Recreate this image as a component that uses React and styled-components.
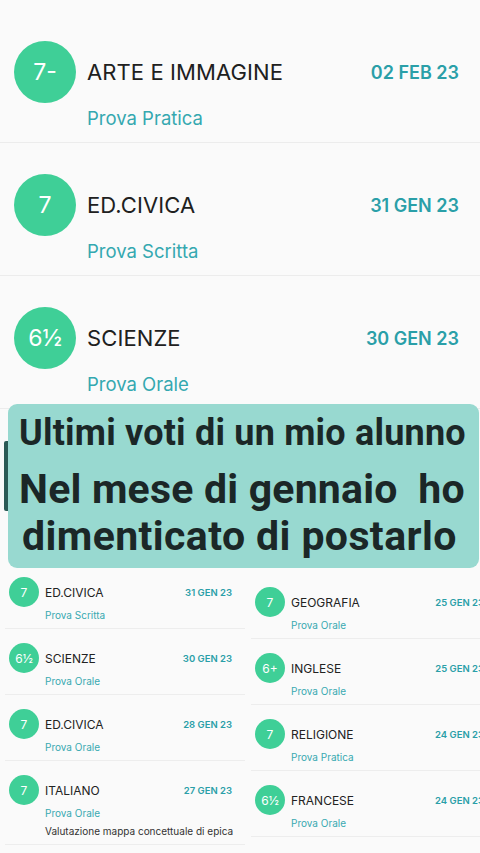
import React from "react";
import styled, { createGlobalStyle } from "styled-components";

const Global = createGlobalStyle`
  html, body { margin: 0; padding: 0; background: #fafafa; }
  body { font-family: "Inter", "Open Sans", sans-serif; }
  * { box-sizing: border-box; }
`;

const Page = styled.div`
  width: 480px;
  height: 853px;
  overflow: hidden;
  background: #fafafa;
  position: relative;
`;

const TopList = styled.div`
  padding-top: 10px;
`;

const BigRow = styled.div`
  display: grid;
  grid-template-columns: 62px 1fr auto;
  grid-template-rows: 62px auto;
  column-gap: 11px;
  align-items: center;
  padding: 31px 21px 12px 14px;
  border-bottom: 1px solid #ececec;
`;

const Circle = styled.div`
  width: ${(p) => p.$size}px;
  height: ${(p) => p.$size}px;
  border-radius: 50%;
  background: #3fcf97;
  color: #fff;
  display: flex;
  align-items: center;
  justify-content: center;
  font-size: ${(p) => p.$font}px;
  font-weight: 400;
`;

const BigTitle = styled.div`
  font-size: 22px;
  color: #202020;
  letter-spacing: 0.1px;
  white-space: nowrap;
`;

const BigDate = styled.div`
  font-size: 18px;
  font-weight: 600;
  color: #2a9fa8;
  white-space: nowrap;
`;

const BigSub = styled.div`
  grid-column: 2 / 4;
  font-size: 18.5px;
  color: #34a8b0;
  line-height: 24px;
  margin-top: 3px;
`;

const BannerWrap = styled.div`
  display: flex;
  align-items: flex-start;
  padding-left: 4px;
  margin-top: -5px;
  position: relative;
  z-index: 1;
`;

const Strip = styled.div`
  width: 4px;
  height: 70px;
  margin-top: 37px;
  background: #2b5a55;
  border-radius: 2px 0 0 2px;
`;

const Banner = styled.div`
  width: 471px;
  height: 164px;
  background: #98d9d0;
  border-radius: 9px;
  padding: 8px 0 0 11px;
  font-family: "Roboto", "Liberation Sans", sans-serif;
  font-weight: 700;
  color: #1b2727;
`;

const BannerLine = styled.div`
  font-size: ${(p) => p.$size}px;
  line-height: ${(p) => p.$lh}px;
  margin-top: ${(p) => p.$mt || 0}px;
  padding-left: ${(p) => p.$indent || 0}px;
  letter-spacing: ${(p) => p.$ls || 0}px;
  white-space: pre;
`;

const BottomGrid = styled.div`
  display: grid;
  grid-template-columns: 240px 246px;
  column-gap: 6px;
  padding-left: 5px;
  margin-top: -6px;
`;

const Column = styled.div`
  padding-top: ${(p) => p.$top}px;
`;

const SmallRow = styled.div`
  display: grid;
  grid-template-columns: 30px 1fr auto;
  grid-template-rows: 30px auto;
  column-gap: 6px;
  align-items: center;
  padding: 14px 13px 6px 4px;
  border-bottom: 1px solid #ededed;
`;

const SmallTitle = styled.div`
  font-size: 12px;
  color: #222;
  white-space: nowrap;
`;

const SmallDate = styled.div`
  font-size: 9.5px;
  font-weight: 600;
  color: #2a9fa8;
  white-space: nowrap;
`;

const SmallSub = styled.div`
  grid-column: 2 / 4;
  font-size: 10px;
  line-height: 14px;
  color: #38a9b1;
  margin-top: 1px;
`;

const SmallNote = styled.div`
  grid-column: 2 / 4;
  font-size: 10px;
  line-height: 14px;
  color: #333;
  margin-top: 4px;
  white-space: nowrap;
`;

const big = [
  { g: "7-", s: "ARTE E IMMAGINE", d: "02 FEB 23", t: "Prova Pratica" },
  { g: "7", s: "ED.CIVICA", d: "31 GEN 23", t: "Prova Scritta" },
  { g: "6½", s: "SCIENZE", d: "30 GEN 23", t: "Prova Orale" },
];

const left = [
  { g: "7", s: "ED.CIVICA", d: "31 GEN 23", t: "Prova Scritta" },
  { g: "6½", s: "SCIENZE", d: "30 GEN 23", t: "Prova Orale" },
  { g: "7", s: "ED.CIVICA", d: "28 GEN 23", t: "Prova Orale" },
  {
    g: "7",
    s: "ITALIANO",
    d: "27 GEN 23",
    t: "Prova Orale",
    n: "Valutazione mappa concettuale di epica",
  },
];

const right = [
  { g: "7", s: "GEOGRAFIA", d: "25 GEN 23", t: "Prova Orale" },
  { g: "6+", s: "INGLESE", d: "25 GEN 23", t: "Prova Orale" },
  { g: "7", s: "RELIGIONE", d: "24 GEN 23", t: "Prova Pratica" },
  { g: "6½", s: "FRANCESE", d: "24 GEN 23", t: "Prova Orale" },
];

function Small({ r }) {
  return (
    <SmallRow>
      <Circle $size={30} $font={12}>{r.g}</Circle>
      <SmallTitle>{r.s}</SmallTitle>
      <SmallDate>{r.d}</SmallDate>
      <SmallSub>{r.t}</SmallSub>
      {r.n && <SmallNote>{r.n}</SmallNote>}
    </SmallRow>
  );
}

export default function App() {
  return (
    <Page>
      <Global />
      <TopList>
        {big.map((r, i) => (
          <BigRow key={i}>
            <Circle $size={62} $font={23}>{r.g}</Circle>
            <BigTitle>{r.s}</BigTitle>
            <BigDate>{r.d}</BigDate>
            <BigSub>{r.t}</BigSub>
          </BigRow>
        ))}
      </TopList>
      <BannerWrap>
        <Strip />
        <Banner>
          <BannerLine $size={36} $lh={42} $ls={0.2}>Ultimi voti di un mio alunno</BannerLine>
          <BannerLine $size={41} $lh={47} $mt={12} $ls={0.2}>{"Nel mese di gennaio  ho"}</BannerLine>
          <BannerLine $size={41} $lh={47} $indent={3} $ls={0.4}>dimenticato di postarlo</BannerLine>
        </Banner>
      </BannerWrap>
      <BottomGrid>
        <Column $top={1}>
          {left.map((r, i) => (
            <Small key={i} r={r} />
          ))}
        </Column>
        <Column $top={11}>
          {right.map((r, i) => (
            <Small key={i} r={r} />
          ))}
        </Column>
      </BottomGrid>
    </Page>
  );
}
